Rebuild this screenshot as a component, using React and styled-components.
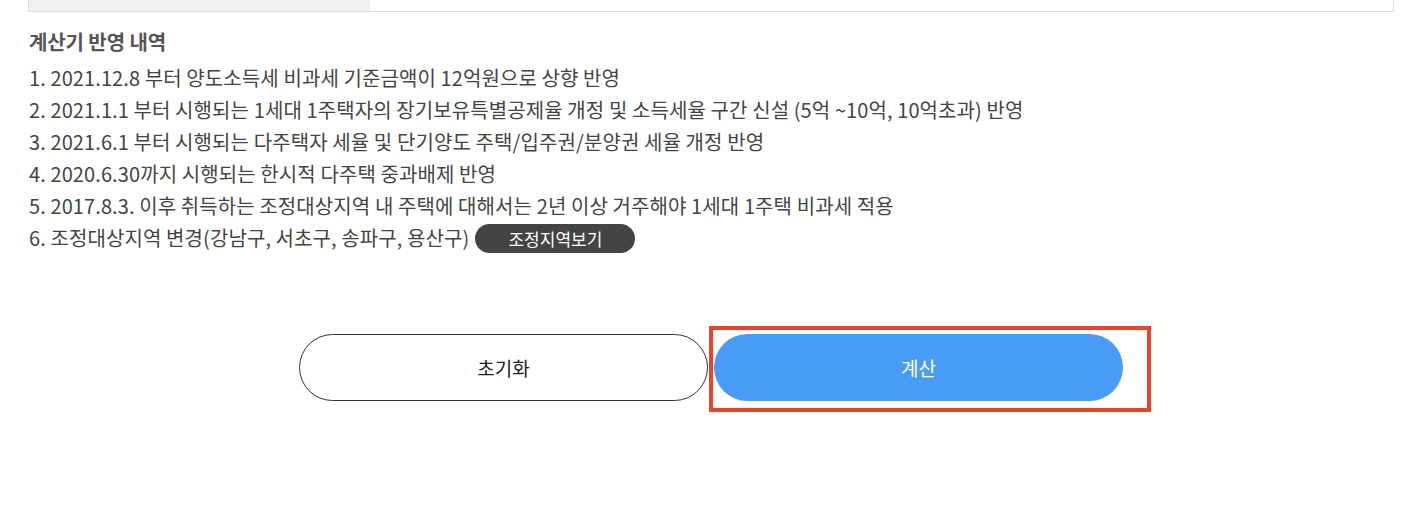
import React from "react";
import styled, { createGlobalStyle } from "styled-components";

const GlobalStyle = createGlobalStyle`
  body {
    margin: 0;
    background: #fff;
    font-family: "Noto Sans CJK KR", "Noto Sans", sans-serif;
  }
`;

const Page = styled.div`
  width: 1366px;
  min-height: 514px;
  padding-left: 28px;
`;

const Table = styled.div`
  display: flex;
  height: 11px;
  border: 1px solid #ddd;
  border-top: none;
`;

const LabelCell = styled.div`
  width: 341px;
  background: #f0f0f0;
`;

const ValueCell = styled.div`
  flex: 1;
  background: #fff;
`;

const Title = styled.h3`
  margin: 14px 0 4px 1px;
  font-size: 20px;
  line-height: 32px;
  font-weight: 700;
  color: #555;
  letter-spacing: -0.1px;
`;

const List = styled.ul`
  list-style: none;
  margin: 0;
  padding: 0 0 0 1px;
`;

const Item = styled.li`
  display: flex;
  align-items: center;
  font-size: 20px;
  line-height: 32px;
  color: #444;
  letter-spacing: 0.1px;
  white-space: nowrap;
`;

const AreaButton = styled.button`
  margin-left: 6px;
  height: 29px;
  padding: 0 33px;
  border: none;
  border-radius: 15px;
  background: #444;
  color: #fff;
  font-family: inherit;
  font-size: 17px;
  cursor: pointer;
`;

const Actions = styled.div`
  display: flex;
  justify-content: center;
  gap: 6px;
  margin-top: 80px;
  padding-bottom: 20px;
`;

const Slot = styled.div`
  position: relative;
`;

const Button = styled.button`
  display: block;
  width: 409px;
  height: 67px;
  border-radius: 34px;
  border: ${(p) => (p.$primary ? "none" : "1px solid #333")};
  background: ${(p) => (p.$primary ? "#489bf6" : "#fff")};
  color: ${(p) => (p.$primary ? "#fff" : "#222")};
  font-family: inherit;
  font-size: 19px;
  cursor: pointer;
`;

const Highlight = styled.div`
  position: absolute;
  left: -5px;
  top: -8px;
  width: 442px;
  height: 86px;
  box-sizing: border-box;
  border: 4px solid #e8442a;
  pointer-events: none;
`;

const notes = [
  "1. 2021.12.8 부터 양도소득세 비과세 기준금액이 12억원으로 상향 반영",
  "2. 2021.1.1 부터 시행되는 1세대 1주택자의 장기보유특별공제율 개정 및 소득세율 구간 신설 (5억 ~10억, 10억초과) 반영",
  "3. 2021.6.1 부터 시행되는 다주택자 세율 및 단기양도 주택/입주권/분양권 세율 개정 반영",
  "4. 2020.6.30까지 시행되는 한시적 다주택 중과배제 반영",
  "5. 2017.8.3. 이후 취득하는 조정대상지역 내 주택에 대해서는 2년 이상 거주해야 1세대 1주택 비과세 적용",
];

export default function App() {
  return (
    <>
      <GlobalStyle />
      <Page>
        <Table>
          <LabelCell />
          <ValueCell />
        </Table>
        <Title>계산기 반영 내역</Title>
        <List>
          {notes.map((n) => (
            <Item key={n}>{n}</Item>
          ))}
          <Item>
            6. 조정대상지역 변경(강남구, 서초구, 송파구, 용산구)
            <AreaButton>조정지역보기</AreaButton>
          </Item>
        </List>
        <Actions>
          <Slot>
            <Button>초기화</Button>
          </Slot>
          <Slot>
            <Button $primary>계산</Button>
            <Highlight />
          </Slot>
        </Actions>
      </Page>
    </>
  );
}
